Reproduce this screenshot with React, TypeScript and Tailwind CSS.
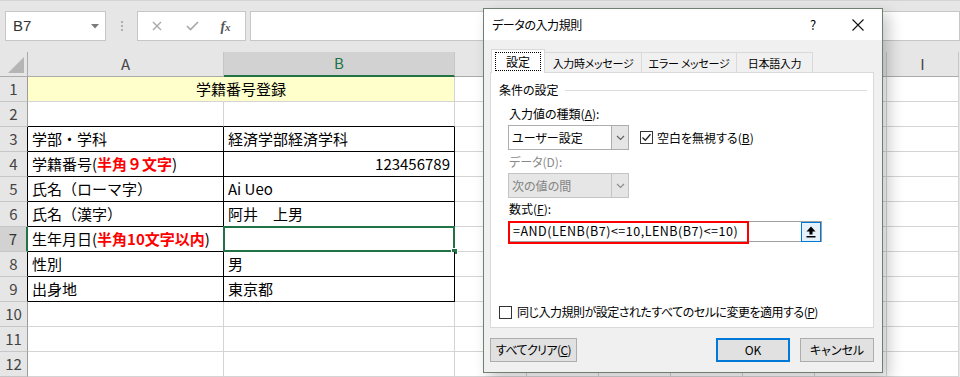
import React from 'react';

const EXTRA = [0, 1, 2, 3, 4, 5, 6];

const Chevron = ({ color = '#606060' }: { color?: string }) => (
  <svg width="9" height="6" viewBox="0 0 9 6">
    <path d="M1 1 L4.5 4.5 L8 1" fill="none" stroke={color} strokeWidth="1.1" />
  </svg>
);

const Box = ({ checked }: { checked?: boolean }) => (
  <div className="w-[13px] h-[13px] shrink-0 border border-[#333333] bg-white flex items-center justify-center">
    {checked && (
      <svg width="11" height="11" viewBox="0 0 11 11">
        <path d="M1.5 5.5 L4.3 8.3 L9.5 2.3" fill="none" stroke="#222" strokeWidth="1.3" />
      </svg>
    )}
  </div>
);

const Row = ({ n, a, b, right }: { n: number; a?: React.ReactNode; b?: React.ReactNode; right?: boolean }) => {
  const table = n >= 3 && n <= 9;
  const sel = n === 7;
  return (
    <>
      <div
        className={
          sel
            ? 'flex items-center justify-center bg-[#d2d2d2] border-b border-b-[#c6c6c6] border-r-2 border-r-[#217346] text-[15px] text-[#333]'
            : table
            ? 'flex items-center justify-center bg-[#e6e6e6] border-b border-b-[#c6c6c6] border-r border-r-black text-[15px] text-[#444]'
            : 'flex items-center justify-center bg-[#e6e6e6] border-b border-b-[#c6c6c6] border-r border-r-[#9b9b9b] text-[15px] text-[#444]'
        }
      >
        {n}
      </div>
      {n === 1 ? (
        <div className="col-span-2 flex items-center justify-center bg-[#ffffcc] border-r border-b border-[#d4d4d4] text-[15px] text-black">
          学籍番号登録
        </div>
      ) : (
        <>
          <div
            className={
              table
                ? 'flex items-center pl-[4px] bg-white border-r border-b border-black text-[15px] text-black whitespace-nowrap'
                : n === 2
                ? 'bg-white border-r border-r-[#d4d4d4] border-b border-b-black'
                : 'bg-white border-r border-b border-[#d4d4d4]'
            }
          >
            {a}
          </div>
          <div
            className={
              table
                ? right
                  ? 'relative flex items-center justify-end pr-[4px] bg-white border-r border-b border-black text-[15px] text-black'
                  : 'relative flex items-center pl-[4px] bg-white border-r border-b border-black text-[15px] text-black whitespace-pre'
                : n === 2
                ? 'bg-white border-r border-r-[#d4d4d4] border-b border-b-black'
                : 'bg-white border-r border-b border-[#d4d4d4]'
            }
          >
            {b}
            {sel && (
              <>
                <div className="absolute -inset-px border-2 border-[#217346]" />
                <div className="absolute -right-[4px] -bottom-[4px] w-[7px] h-[7px] bg-[#217346] border border-white" />
              </>
            )}
          </div>
        </>
      )}
      {EXTRA.map((i) => (
        <div key={i} className="bg-white border-r border-b border-[#d4d4d4]" />
      ))}
    </>
  );
};

const Red = ({ children }: { children: React.ReactNode }) => (
  <span className="text-[#ff0000] font-bold">{children}</span>
);

const Tab = ({ label, w }: { label: string; w: string }) => (
  <div className={`${w} h-[20px] border border-l-0 border-b-0 border-[#d9d9d9] bg-[#f0f0f0] flex items-center justify-center text-[11px] leading-[14px] tracking-[-0.3px] text-black whitespace-nowrap`}>
    <span>{label}</span>
  </div>
);

export default function App() {
  return (
    <div className="relative w-[960px] h-[377px] overflow-hidden bg-[#e6e6e6] font-['Noto_Sans_CJK_JP',sans-serif]">
      {/* formula bar */}
      <div className="h-[52px] border-t border-[#d4d4d4] flex items-start pt-[10px] pl-[5px]">
        <div className="w-[101px] h-[30px] bg-white border border-[#c6c6c6] flex items-center pl-[7px] pr-[6px]">
          <span className="flex-1 text-[15px] text-[#333] font-['Liberation_Sans',sans-serif]">B7</span>
          <svg width="8" height="5" viewBox="0 0 8 5">
            <path d="M0 0 H8 L4 4.5 Z" fill="#7a7a7a" />
          </svg>
        </div>
        <div className="w-[31px] h-[30px] flex flex-col items-center justify-center gap-[2px]">
          <div className="w-[2px] h-[2px] bg-[#b0b0b0]" />
          <div className="w-[2px] h-[2px] bg-[#b0b0b0]" />
          <div className="w-[2px] h-[2px] bg-[#b0b0b0]" />
        </div>
        <div className="w-[109px] h-[30px] bg-white border border-[#c6c6c6] flex items-center">
          <div className="w-[38px] flex justify-center">
            <svg width="10" height="10" viewBox="0 0 10 10">
              <path d="M1 1 L9 9 M9 1 L1 9" stroke="#a8a8a8" strokeWidth="1.4" />
            </svg>
          </div>
          <div className="w-[32px] flex justify-center">
            <svg width="13" height="10" viewBox="0 0 13 10">
              <path d="M1 5 L4.5 8.5 L12 1" fill="none" stroke="#a8a8a8" strokeWidth="1.6" />
            </svg>
          </div>
          <div className="flex-1 flex justify-center pr-[2px] text-[14px] italic font-bold text-[#555] font-['Liberation_Serif',serif]">
            f<span className="text-[11px] mt-[3px]">x</span>
          </div>
        </div>
        <div className="flex-1 ml-[4px] h-[30px] bg-white border border-[#c6c6c6]" />
      </div>

      {/* sheet */}
      <div className="grid grid-cols-[28px_196px_231px_repeat(7,72px)] grid-rows-[25px_repeat(12,25px)]">
        <div className="relative bg-[#e6e6e6] border-r border-b border-[#ababab]">
          <svg className="absolute right-[3px] bottom-[3px]" width="16" height="16" viewBox="0 0 16 16">
            <path d="M16 0 V16 H0 Z" fill="#b5b5b5" />
          </svg>
        </div>
        <div className="flex items-center justify-center bg-[#e6e6e6] border-r border-r-[#c6c6c6] border-b border-b-[#ababab] text-[15px] text-[#444]">
          A
        </div>
        <div className="flex items-center justify-center bg-[#d2d2d2] border-r border-r-[#c6c6c6] border-b-2 border-b-[#217346] text-[15px] text-[#217346]">
          B
        </div>
        {['C', 'D', 'E', 'F', 'G', 'H', 'I'].map((c) => (
          <div
            key={c}
            className="flex items-center justify-center bg-[#e6e6e6] border-r border-r-[#c6c6c6] border-b border-b-[#ababab] text-[15px] text-[#444]"
          >
            {c}
          </div>
        ))}
        <Row n={1} />
        <Row n={2} />
        <Row n={3} a="学部・学科" b="経済学部経済学科" />
        <Row n={4} a={<>学籍番号(<Red>半角９文字</Red>)</>} b="123456789" right />
        <Row n={5} a="氏名（ローマ字）" b="Ai Ueo" />
        <Row n={6} a="氏名（漢字）" b="阿井　上男" />
        <Row n={7} a={<>生年月日(<Red>半角10文字以内</Red>)</>} />
        <Row n={8} a="性別" b="男" />
        <Row n={9} a="出身地" b="東京都" />
        <Row n={10} />
        <Row n={11} />
        <Row n={12} />
      </div>

      {/* dialog */}
      <div className="absolute left-[483px] top-[8px] w-[400px] h-[365px] border border-[#6f7f71] bg-[#f0f0f0] shadow-[6px_6px_14px_rgba(0,0,0,0.22)] flex flex-col text-black [font-feature-settings:'palt']">
        <div className="h-[31px] bg-white flex items-center pl-[8px] text-[12px]">
          <span className="flex-1 tracking-[-0.4px]">データの入力規則</span>
          <span className="w-[20px] text-center text-[13px]">?</span>
          <div className="w-[46px] ml-[12px] mr-[1px] flex justify-center">
            <svg width="12" height="12" viewBox="0 0 12 12">
              <path d="M0.5 0.5 L11.5 11.5 M11.5 0.5 L0.5 11.5" stroke="#111" strokeWidth="1.1" />
            </svg>
          </div>
        </div>

        <div className="flex-1 flex flex-col pl-[6px] pr-[8px] pt-[9px]">
          <div className="flex items-end pl-[1px]">
            <div className="relative z-10 w-[54px] h-[24px] -mb-px border border-b-0 border-[#d9d9d9] bg-white flex items-center justify-center">
              <div className="w-[46px] h-[19px] border border-dotted border-black flex items-center justify-center text-[12px]">
                設定
              </div>
            </div>
            <Tab label="入力時メッセージ" w="w-[97px]" />
            <Tab label="エラー メッセージ" w="w-[95px]" />
            <Tab label="日本語入力" w="w-[76px]" />
          </div>

          <div className="h-[256px] bg-white border border-[#d9d9d9] flex flex-col text-[12px]">
            <div className="flex items-center pl-[8px] pr-[6px] mt-[8px] h-[18px]">
              <span>条件の設定</span>
              <div className="flex-1 ml-[6px] h-px bg-[#dcdcdc]" />
            </div>
            <div className="pl-[18px] mt-[6px] h-[18px] leading-[18px]">
              入力値の種類(<span className="underline">A</span>):
            </div>
            <div className="flex items-center pl-[17px] mt-[2px]">
              <div className="flex w-[121px] h-[25px] border border-[#adadad] bg-white">
                <div className="flex-1 flex items-center pl-[3px]">ユーザー設定</div>
                <div className="w-[17px] bg-[#e5e5e5] border-l border-[#adadad] flex items-center justify-center">
                  <Chevron />
                </div>
              </div>
              <div className="ml-[11px] flex items-center gap-[4px]">
                <Box checked />
                <span>
                  空白を無視する(<span className="underline">B</span>)
                </span>
              </div>
            </div>
            <div className="pl-[18px] mt-[3px] h-[18px] leading-[18px] text-[#8a8a8a]">データ(D):</div>
            <div className="pl-[17px] mt-[2px]">
              <div className="flex w-[121px] h-[25px] border border-[#c4c4c4] bg-[#e6e6e6] text-[#838383]">
                <div className="flex-1 flex items-center pl-[3px]">次の値の間</div>
                <div className="w-[17px] bg-[#e5e5e5] border-l border-[#c4c4c4] flex items-center justify-center">
                  <Chevron color="#8a8a8a" />
                </div>
              </div>
            </div>
            <div className="pl-[18px] mt-[2px] h-[18px] leading-[18px]">
              数式(<span className="underline">F</span>):
            </div>
            <div className="pl-[17px] mt-[3px]">
              <div className="relative w-[314px] h-[21px] border border-[#a0a0a0] bg-white flex items-center">
                <span className="flex-1 pl-[4px] text-[12.5px] tracking-[0.5px] whitespace-nowrap">
                  =AND(LENB(B7)&lt;=10,LENB(B7)&lt;=10)
                </span>
                <div className="w-[20px] h-[20px] mr-0 border border-[#0078d7] bg-[#e5f1fb] flex items-center justify-center">
                  <svg width="10" height="12" viewBox="0 0 10 12">
                    <path d="M5 0.5 L9.5 5.5 H6.5 V8.5 H3.5 V5.5 H0.5 Z" fill="#000" />
                    <rect x="0.5" y="10" width="9" height="1.5" fill="#000" />
                  </svg>
                </div>
                <div className="absolute -left-px -top-px w-[241px] h-[23px] border-2 border-[#ff0000]" />
              </div>
            </div>
            <div className="mt-auto mb-[6px] pl-[8px] flex items-center gap-[5px] whitespace-nowrap">
              <Box />
              <span className="tracking-[-0.5px]">
                同じ入力規則が設定されたすべてのセルに変更を適用する(<span className="underline">P</span>)
              </span>
            </div>
          </div>

          <div className="mt-[10px] flex items-center text-[12px] whitespace-nowrap">
            <div className="w-[87px] h-[24px] bg-[#e1e1e1] border border-[#adadad] flex items-center justify-center tracking-[-0.6px]">
              すべてクリア(<span className="underline">C</span>)
            </div>
            <div className="flex-1" />
            <div className="w-[74px] h-[24px] bg-[#e1e1e1] border-2 border-[#0078d7] flex items-center justify-center">
              OK
            </div>
            <div className="w-[74px] h-[24px] ml-[10px] bg-[#e1e1e1] border border-[#adadad] flex items-center justify-center">
              キャンセル
            </div>
          </div>
        </div>
      </div>
    </div>
  );
}
